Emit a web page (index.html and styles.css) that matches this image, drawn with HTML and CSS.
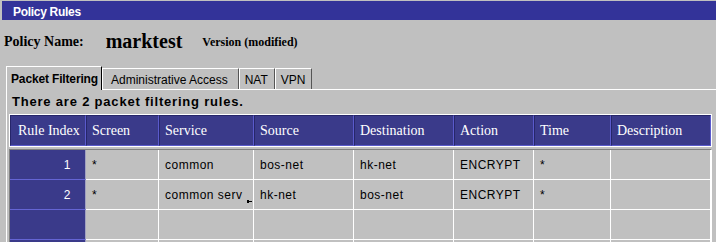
FILE: index.html
```html
<!DOCTYPE html>
<html>
<head>
<meta charset="utf-8">
<title>Policy Rules</title>
<link rel="stylesheet" href="styles.css">
</head>
<body>
<div class="titlebar">Policy Rules</div>
<div class="policy"><span class="label">Policy Name:</span><span class="name">marktest</span><span class="version">Version (modified)</span></div>
<div class="tabs">
  <div class="tab active">Packet Filtering</div>
  <div class="tab wide">Administrative Access</div>
  <div class="tab small">NAT</div>
  <div class="tab small">VPN</div>
</div>
<div class="panel">
  <div class="summary">There are 2 packet filtering rules.</div>
  <div class="thead grid">
    <div class="th first">Rule Index</div>
    <div class="th">Screen</div>
    <div class="th">Service</div>
    <div class="th">Source</div>
    <div class="th">Destination</div>
    <div class="th">Action</div>
    <div class="th">Time</div>
    <div class="th">Description</div>
  </div>
  <div class="tbody">
    <div class="grid">
      <div class="td idx">1</div>
      <div class="td">*</div>
      <div class="td">common</div>
      <div class="td">bos-net</div>
      <div class="td">hk-net</div>
      <div class="td">ENCRYPT</div>
      <div class="td">*</div>
      <div class="td"></div>
    </div>
    <div class="grid">
      <div class="td idx">2</div>
      <div class="td">*</div>
      <div class="td clip">common serv<svg class="more" width="5" height="3" viewBox="0 0 5 3"><rect x="0" y="0" width="2" height="3" fill="#000"/><rect x="2" y="1" width="3" height="1" fill="#000"/></svg></div>
      <div class="td">hk-net</div>
      <div class="td">bos-net</div>
      <div class="td">ENCRYPT</div>
      <div class="td">*</div>
      <div class="td"></div>
    </div>
    <div class="grid">
      <div class="td idx"></div>
      <div class="td"></div>
      <div class="td"></div>
      <div class="td"></div>
      <div class="td"></div>
      <div class="td"></div>
      <div class="td"></div>
      <div class="td"></div>
    </div>
    <div class="grid">
      <div class="td idx"></div>
      <div class="td"></div>
      <div class="td"></div>
      <div class="td"></div>
      <div class="td"></div>
      <div class="td"></div>
      <div class="td"></div>
      <div class="td"></div>
    </div>
  </div>
</div>
</body>
</html>
```
FILE: styles.css
```css
html, body {
  margin: 0;
  padding: 0;
  background: #c0c0c0;
  overflow: hidden;
}

.titlebar {
  margin: 1px 0 0 2px;
  height: 19px;
  box-sizing: border-box;
  padding: 4px 0 0 11px;
  background: #333399;
  color: #fff;
  font: bold 12px/14px "Liberation Sans", Arial, sans-serif;
  letter-spacing: -0.3px;
}

.policy {
  height: 46px;
  box-sizing: border-box;
  padding: 9px 0 0 4px;
  font-family: "Liberation Serif", "Times New Roman", serif;
  font-weight: bold;
  font-size: 14px;
  line-height: 24px;
  color: #000;
}

.policy .label {
  font-size: 14px;
}

.policy .name {
  font-size: 20px;
  margin-left: 22px;
  vertical-align: -2px;
}

.policy .version {
  font-size: 12px;
  margin-left: 20px;
}

.tabs {
  display: flex;
  align-items: flex-end;
  height: 23px;
  padding-left: 6px;
}

.tab {
  font: 12px/14px "Liberation Sans", Arial, sans-serif;
  color: #000;
  background: #c0c0c0;
  border-top: 1px solid #fff;
  border-left: 1px solid #fff;
  border-right: 1px solid #555;
  padding: 4px 8px 2px 8px;
}

.tab.wide {
  padding-right: 10px;
}

.tab.small {
  padding-left: 5px;
  padding-right: 6px;
}

.tab.active {
  font-weight: bold;
  letter-spacing: -0.15px;
  padding: 5px 3px 4px 4px;
  margin-bottom: -1px;
  border-right-color: #000;
  position: relative;
  z-index: 1;
}

.panel {
  margin-left: 6px;
  border-top: 1px solid #fff;
  border-left: 1px solid #fff;
}

.summary {
  font: bold 13px/16px "Liberation Sans", Arial, sans-serif;
  letter-spacing: 0.8px;
  color: #000;
  padding: 4px 0 0 5px;
}

.grid {
  display: grid;
  grid-template-columns: 76px 73px 95px 100px 100px 80px 77px 100px;
}

.thead {
  margin: 4px 0 0 2px;
  width: 701px;
  border: 1px solid #fff;
}

.th {
  height: 31px;
  box-sizing: border-box;
  background: #3a3a8a;
  border-top: 1px solid #26266a;
  border-left: 1px solid #26266a;
  border-bottom: 1px solid #5a5acc;
  border-right: 1px solid #5a5acc;
  color: #fff;
  font: 14px/16px "Liberation Serif", "Times New Roman", serif;
  display: flex;
  align-items: center;
  padding-left: 5px;
  white-space: nowrap;
  overflow: hidden;
}

.th.first {
  padding-left: 7px;
}

.tbody {
  margin: 2px 0 0 2px;
  width: 701px;
  border-top: 1px solid #808080;
  border-left: 1px solid #808080;
  border-right: 1px solid #fff;
}

.td {
  height: 30px;
  box-sizing: border-box;
  border-right: 1px solid #fff;
  border-bottom: 1px solid #fff;
  padding-left: 6px;
  font: 12px/14px "Liberation Sans", Arial, sans-serif;
  letter-spacing: 0.5px;
  color: #000;
  display: flex;
  align-items: center;
  white-space: nowrap;
  overflow: hidden;
}

.td.idx {
  background: #3a3a8a;
  color: #fff;
  justify-content: flex-end;
  padding-right: 14px;
  border-bottom-color: #6464d4;
  border-right-color: #a0a0c0;
}

.td.clip {
  position: relative;
}

.td.clip .more {
  position: absolute;
  right: 1px;
  bottom: 6px;
}
```
